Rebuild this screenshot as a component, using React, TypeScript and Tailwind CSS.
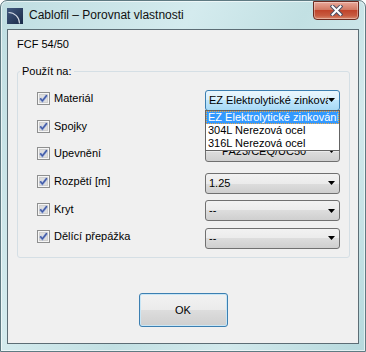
import React from 'react';

const rows = [
  { label: 'Materiál', value: 'EZ Elektrolytické zinkování', open: true },
  { label: 'Spojky', value: '' },
  { label: 'Upevnění', value: 'PA23/CEQ/UC50', indent: true },
  { label: 'Rozpětí [m]', value: '1.25' },
  { label: 'Kryt', value: '--' },
  { label: 'Dělící přepážka', value: '--' },
];

const options = ['EZ Elektrolytické zinkování', '304L Nerezová ocel', '316L Nerezová ocel'];

function CheckBox() {
  return (
    <svg width="13" height="13" viewBox="0 0 13 13" className="shrink-0">
      <rect x="0.5" y="0.5" width="12" height="12" fill="#f6f6f6" stroke="#8e8f8f" />
      <rect x="2.5" y="2.5" width="8" height="8" fill="#dedede" stroke="#cfcfcf" />
      <path d="M3.2 6.4 L5.4 8.9 L9.9 3.2" fill="none" stroke="#8aa0d8" strokeWidth="2.4" />
      <path d="M3.2 6.4 L5.4 8.9 L9.9 3.2" fill="none" stroke="#3f57a0" strokeWidth="1.2" />
    </svg>
  );
}

function Arrow() {
  return (
    <svg width="7" height="4" viewBox="0 0 7 4" className="shrink-0">
      <path d="M0 0 H7 L3.5 4 Z" fill="#000" />
    </svg>
  );
}

function Combo({ value, open, indent }: { value: string; open?: boolean; indent?: boolean }) {
  return (
    <div className={indent ? 'relative -mt-[5px] ml-auto mr-[9px] w-[135px]' : 'relative mt-[3px] ml-auto mr-[9px] w-[135px]'}>
      <div
        className={
          open
            ? 'flex h-[21px] items-center rounded-[3px] border border-[#3c7fb1] bg-[linear-gradient(#eaf6fd,#d9f0fc_50%,#bee6fd_50%,#a7d9f5)] pl-[3px] pr-[4px]'
            : 'flex h-[21px] items-center rounded-[3px] border border-[#707070] bg-[linear-gradient(#f2f2f2,#ebebeb_50%,#dddddd_50%,#cfcfcf)] pl-[3px] pr-[4px]'
        }
      >
        <span className={indent ? 'flex-1 overflow-hidden whitespace-nowrap pl-[13px]' : 'flex-1 overflow-hidden whitespace-nowrap'}>
          {value}
        </span>
        <Arrow />
      </div>
      {open && (
        <div className="absolute left-0 top-[20px] z-10 w-[135px] border border-[#646464] bg-white">
          {options.map((o, i) => (
            <div
              key={o}
              className={
                i === 0
                  ? 'h-[13px] overflow-hidden whitespace-nowrap border border-dotted border-[#f0a848] bg-[#3399ff] pl-[1px] leading-[11px] text-white'
                  : 'h-[13px] overflow-hidden whitespace-nowrap pl-[2px] leading-[13px]'
              }
            >
              {o}
            </div>
          ))}
        </div>
      )}
    </div>
  );
}

export default function App() {
  return (
    <div className="h-[352px] w-[366px] bg-white font-['Liberation_Sans',Arial,sans-serif] text-[11px] leading-[13px] text-black">
      <div className="flex h-full flex-col rounded-t-[7px] border border-[#5f7a82] bg-[linear-gradient(120deg,#bfdde1,#d4ebee_35%,#c2e0e3_55%,#d2e9ec_75%,#b6d9dd)] shadow-[inset_0_0_0_1px_rgba(255,255,255,0.6)]">
        {/* title bar */}
        <div className="flex h-[28px] items-center">
          <svg width="16" height="16" viewBox="0 0 16 16" className="ml-[6px] mt-[1px] shrink-0">
            <defs>
              <linearGradient id="ico" x1="0" y1="0" x2="1" y2="1">
                <stop offset="0" stopColor="#41597f" />
                <stop offset="1" stopColor="#1a2a48" />
              </linearGradient>
            </defs>
            <rect width="16" height="16" fill="url(#ico)" />
            <path d="M1.5 4.5 A11 11 0 0 1 12.5 15.5" fill="none" stroke="#d3dae4" strokeWidth="1.1" />
          </svg>
          <span className="ml-[6px] text-[12px] leading-[14px] text-[#111]">Cablofil – Porovnat vlastnosti</span>
          <button className="mr-[6px] ml-auto -mt-[10px] flex h-[19px] w-[46px] items-center justify-center rounded-b-[4px] border border-[#6b2a1f] bg-[linear-gradient(#e9a899,#d27a64_45%,#c0442b_50%,#c75b40_80%,#d98a6f)] shadow-[inset_0_0_0_1px_rgba(255,255,255,0.35)]">
            <svg width="13" height="11" viewBox="0 0 13 11">
              <path d="M2.5 1.5 L10.5 9.5 M10.5 1.5 L2.5 9.5" stroke="#4b4f63" strokeWidth="4" strokeLinecap="square" />
              <path d="M2.5 1.5 L10.5 9.5 M10.5 1.5 L2.5 9.5" stroke="#ffffff" strokeWidth="2" strokeLinecap="square" />
            </svg>
          </button>
        </div>

        {/* client area */}
        <div className="mx-[6px] mb-[7px] flex flex-1 flex-col border border-[#5c6d75] bg-[#f0f0f0]">
          <div className="pl-[9px] pt-[8px]">FCF 54/50</div>

          <fieldset className="ml-[9px] mt-[14px] h-[193px] w-[333px] rounded-[3px] border border-[#d5dfe5] pt-[7px]">
            <legend className="ml-[2px] px-[2px] leading-[13px]">Použít na:</legend>
            {rows.map((r) => (
              <div key={r.label} className="flex h-[27.6px] items-center">
                <div className="flex items-center gap-[4px] pl-[19px]">
                  <CheckBox />
                  <span>{r.label}</span>
                </div>
                <Combo value={r.value} open={r.open} indent={r.indent} />
              </div>
            ))}
          </fieldset>

          <button className="mx-auto mt-[35px] h-[34px] w-[89px] rounded-[3px] border border-[#3c7fb1] bg-[linear-gradient(#f2f2f2,#ebebeb_50%,#dddddd_50%,#cfcfcf)] shadow-[inset_0_0_0_1px_#c8e6f6]">
            OK
          </button>
        </div>
      </div>
    </div>
  );
}
